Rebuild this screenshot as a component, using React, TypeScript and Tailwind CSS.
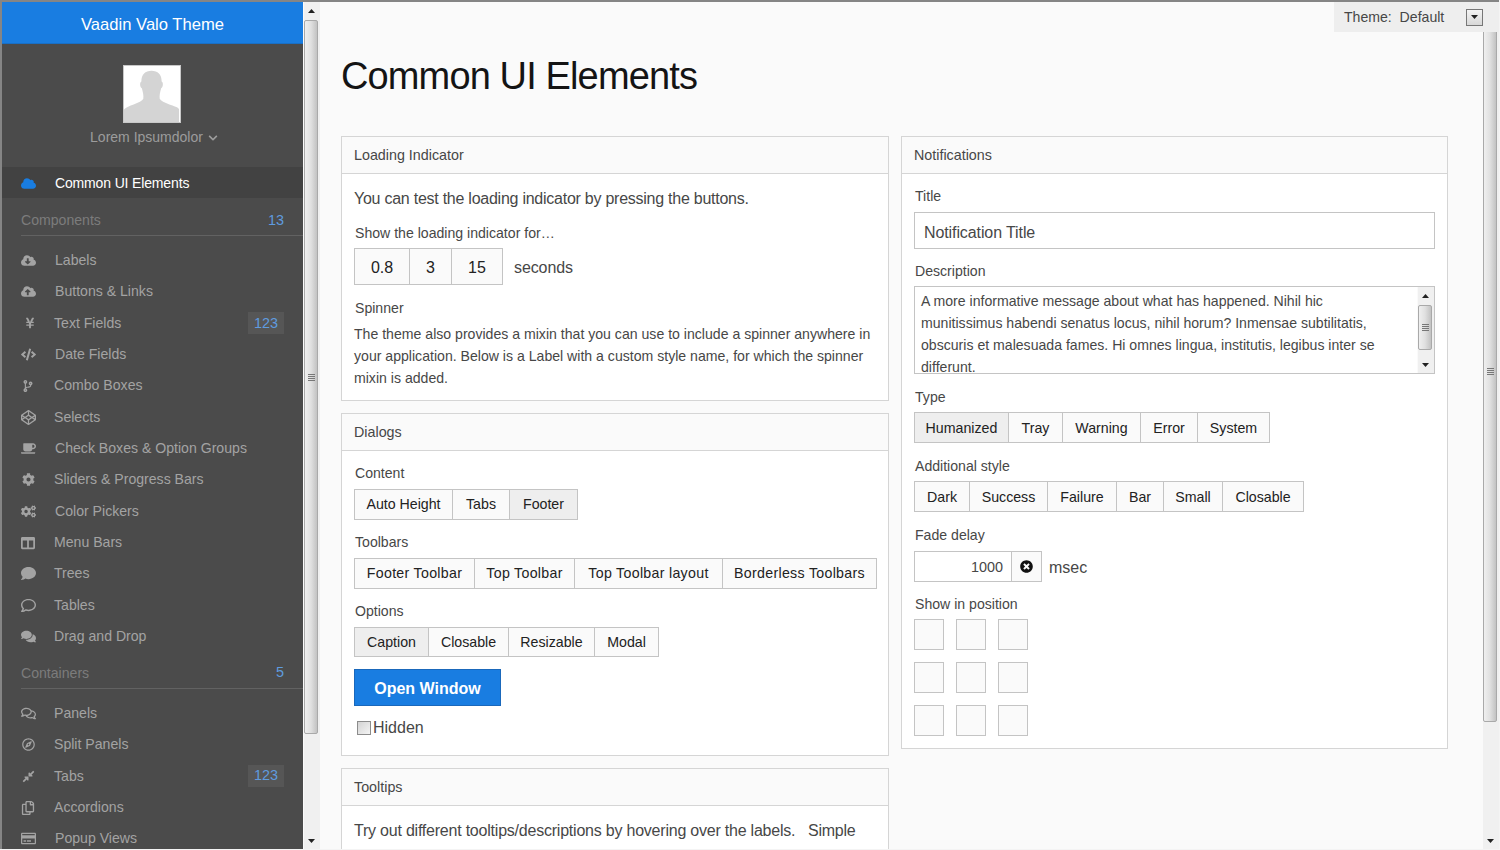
import React from "react";
import {
  FaCloud, FaCloudDownloadAlt, FaCloudUploadAlt, FaYenSign, FaCode, FaCodeBranch, FaCodepen, FaCoffee, FaCog, FaCogs,
  FaColumns, FaComment, FaRegComment, FaComments, FaRegComments, FaRegCompass, FaCompressAlt, FaRegCopy, FaRegCreditCard, FaChevronDown, FaTimesCircle,
} from "react-icons/fa";

type Item = { t: string; I: React.ComponentType<{ className?: string }>; c: string; s: string; badge?: boolean };

const components: Item[] = [
  { t: "Labels", I: FaCloudDownloadAlt, c: "w-[34px]", s: "text-[15px]" },
  { t: "Buttons & Links", I: FaCloudUploadAlt, c: "w-[34px]", s: "text-[15px]" },
  { t: "Text Fields", I: FaYenSign, c: "w-[33px]", s: "text-[12px] ml-[3px]", badge: true },
  { t: "Date Fields", I: FaCode, c: "w-[34px]", s: "text-[15px]" },
  { t: "Combo Boxes", I: FaCodeBranch, c: "w-[33px]", s: "text-[12px] ml-px" },
  { t: "Selects", I: FaCodepen, c: "w-[33px]", s: "text-[15px]" },
  { t: "Check Boxes & Option Groups", I: FaCoffee, c: "w-[34px]", s: "text-[15px]" },
  { t: "Sliders & Progress Bars", I: FaCog, c: "w-[33px]", s: "text-[13px] ml-px" },
  { t: "Color Pickers", I: FaCogs, c: "w-[34px]", s: "text-[15px]" },
  { t: "Menu Bars", I: FaColumns, c: "w-[33px]", s: "text-[14px]" },
  { t: "Trees", I: FaComment, c: "w-[33px]", s: "text-[15px]" },
  { t: "Tables", I: FaRegComment, c: "w-[33px]", s: "text-[15px]" },
  { t: "Drag and Drop", I: FaComments, c: "w-[33px]", s: "text-[15px]" },
];
const containers: Item[] = [
  { t: "Panels", I: FaRegComments, c: "w-[33px]", s: "text-[15px]" },
  { t: "Split Panels", I: FaRegCompass, c: "w-[33px]", s: "text-[13px] ml-px" },
  { t: "Tabs", I: FaCompressAlt, c: "w-[33px]", s: "text-[13px] ml-px", badge: true },
  { t: "Accordions", I: FaRegCopy, c: "w-[33px]", s: "text-[14px]" },
  { t: "Popup Views", I: FaRegCreditCard, c: "w-[34px]", s: "text-[15px]" },
];

function Row({ item }: { item: Item }) {
  const { I } = item;
  return (
    <div className="h-[31.33px] flex items-center pl-[19px] pr-[19px] text-[14.1px] text-[#a3a3a3]">
      <span className={`${item.c} flex items-center`}>
        <I className={item.s} />
      </span>
      <span className="flex-1">{item.t}</span>
      {item.badge && (
        <span className="h-[22px] w-[36px] flex items-center justify-center bg-[#565656] text-[#5f9bdf] text-[14.4px]">123</span>
      )}
    </div>
  );
}

function Section({ t, n, pt }: { t: string; n: string; pt: string }) {
  return (
    <div className={`h-[38px] ml-[19px] ${pt} pr-[19px] flex items-center justify-between border-b border-[#626262] text-[14.1px]`}>
      <span className="text-[#7c7c7c]">{t}</span>
      <span className="text-[#5f9bdf] text-[14.4px]">{n}</span>
    </div>
  );
}

function Tri({ down }: { down?: boolean }) {
  return (
    <svg width="7" height="4" viewBox="0 0 7 4" className="block">
      <path d={down ? "M0 0h7L3.500 4z" : "M3.500 0L7 4H0z"} fill="#222" />
    </svg>
  );
}

function Grip() {
  return (
    <span className="flex flex-col gap-px w-[7px]">
      <span className="h-px bg-[#777]" />
      <span className="h-px bg-[#777]" />
      <span className="h-px bg-[#777]" />
      <span className="h-px bg-[#777]" />
    </span>
  );
}

function Scrollbar({ thumb, top, btn }: { thumb: string; top: string; btn: string }) {
  return (
    <div className="w-[17px] shrink-0 h-full flex flex-col bg-[#f0f0f0] border-l border-[#fafafa]">
      <div className={`${top} shrink-0 flex items-center justify-center pr-[2px]`}>
        <Tri />
      </div>
      <div className={`${thumb} shrink-0 mr-[2px] rounded-[2px] border border-[#a9a9a9] bg-linear-to-r from-[#efefef] via-[#e0e0e0] to-[#c2c2c2] flex items-center justify-center`}>
        <Grip />
      </div>
      <div className="flex-1" />
      <div className={`${btn} shrink-0 flex items-center justify-center pr-[2px]`}>
        <Tri down />
      </div>
    </div>
  );
}

function Card({ title, children, body }: { title: string; children: React.ReactNode; body: string }) {
  return (
    <section className="border border-[#d5d5d5] bg-white">
      <div className="h-[37px] px-3 pt-[2px] flex items-center border-b border-[#d5d5d5] bg-[#fafafa] text-[14.3px]">{title}</div>
      <div className={`px-3 ${body}`}>{children}</div>
    </section>
  );
}

function Label({ children, mt }: { children: React.ReactNode; mt: string }) {
  return <div className={`${mt} ml-px h-[22px] leading-[22px] text-[14.1px]`}>{children}</div>;
}

type Cell = { t: string; w: string };

function Group({ items, on, h, mt, pad = "", extra = "" }: { items: Cell[]; on?: string; h: string; mt: string; pad?: string; extra?: string }) {
  return (
    <div className={`${mt} ${h} ${extra} inline-flex align-top border border-[#c4c4c4] text-[14.2px] text-[#222]`}>
      {items.map((x, i) => (
        <span
          key={x.t}
          className={`${x.w} ${pad} flex items-center justify-center ${i ? "border-l border-[#c4c4c4]" : ""} ${x.t === on ? "bg-[#eeeeee]" : "bg-[#fafafa]"}`}
        >
          {x.t}
        </span>
      ))}
    </div>
  );
}

export default function App() {
  return (
    <div className="w-[1500px] h-[850px] overflow-hidden bg-[#f4f4f4] [font-family:'Liberation_Sans',Arial,sans-serif] text-[#474747]">
      <div className="w-[1499px] h-[849px] flex border-t-2 border-l-2 border-[#858585] relative">
        <aside className="w-[301px] shrink-0 h-full bg-[#4b4b4b] overflow-hidden">
          <div className="h-[42px] pt-[5px] bg-[#197de1] border-b border-[#1a6fc4] flex items-center justify-center text-[16.6px] text-white">
            Vaadin Valo Theme
          </div>
          <div className="h-[123px] pt-[21px] pr-[2px] flex flex-col items-center">
            <svg width="58" height="58" viewBox="0 0 58 58" className="block border border-[#c8c8c8] bg-white">
              <path
                d="M18 16c0-7 4-11 10.500-11S39 9 39 16c2 1 1.500 6-.5 7-1 4-2 7-1.500 11 1 2 5 4 10 6 4 1.500 10 3 10 5v13H0V45c2-2 6-3.500 10-5 5-2 9-4 10-6 .5-4-.5-7-1.500-11-2-1-2.500-6-.5-7z"
                fill="#d4d4d4"
              />
            </svg>
            <div className="mt-[3px] ml-[5px] h-[22px] flex items-center text-[14px] text-[#9c9c9c]">
              Lorem Ipsumdolor
              <FaChevronDown className="ml-[5px] text-[10px] mt-[2px]" />
            </div>
          </div>
          <div className="h-[31px] pt-[2px] bg-[#424242] flex items-center pl-[19px] text-[14px] tracking-[-0.15px] text-white">
            <span className="w-[34px] flex items-center">
              <FaCloud className="text-[15px] text-[#197de1]" />
            </span>
            Common UI Elements
          </div>
          <Section t="Components" n="13" pt="pt-[9px]" />
          <div className="mt-[9px] -mb-[1px]">
            {components.map((i) => (
              <Row key={i.t} item={i} />
            ))}
          </div>
          <Section t="Containers" n="5" pt="pt-[7px]" />
          <div className="mt-[8.7px]">
            {containers.map((i) => (
              <Row key={i.t} item={i} />
            ))}
          </div>
        </aside>
        <Scrollbar top="h-[18px]" thumb="h-[714px]" btn="h-[17px]" />

        <main className="flex-1 min-w-0 h-full bg-[#fafafa] overflow-hidden pl-[21px] pt-[49px]">
          <h1 className="h-[50px] leading-[50px] text-[38px] text-[#141414] tracking-[-0.87px]">Common UI Elements</h1>
          <div className="mt-[35px] grid grid-cols-[548px_547px] gap-x-3 items-start">
            <div className="flex flex-col gap-3">
              <Card title="Loading Indicator" body="pt-[13px] pb-[11px]">
                <div className="h-[22px] leading-[24px] text-[16px] tracking-[-0.25px]">You can test the loading indicator by pressing the buttons.</div>
                <Label mt="mt-[13px]">Show the loading indicator for…</Label>
                <div className="mt-[4px] flex items-center">
                  <div className="h-[37px] flex border border-[#c4c4c4] text-[16px] text-[#222] bg-[#fafafa]">
                    <span className="w-[54px] pt-[2px] flex items-center justify-center">0.8</span>
                    <span className="w-[42px] pt-[2px] flex items-center justify-center border-l border-[#c4c4c4]">3</span>
                    <span className="w-[51px] pt-[2px] flex items-center justify-center border-l border-[#c4c4c4]">15</span>
                  </div>
                  <span className="ml-[11px] pt-[2px] text-[16px] tracking-[-0.1px]">seconds</span>
                </div>
                <Label mt="mt-[12px]">Spinner</Label>
                <p className="mt-[4px] text-[14.1px] leading-[22px]">
                  The theme also provides a mixin that you can use to include a spinner anywhere in your application. Below is a Label with a custom style name, for which the spinner mixin is added.
                </p>
              </Card>

              <Card title="Dialogs" body="pt-[11px] pb-[16px]">
                <Label mt="mt-0">Content</Label>
                <Group
                  mt="mt-[5px]"
                  h="h-[31px]"
                  items={[
                    { t: "Auto Height", w: "w-[97px]" },
                    { t: "Tabs", w: "w-[57px]" },
                    { t: "Footer", w: "w-[68px]" },
                  ]}
                  on="Footer"
                />
                <Label mt="mt-[11px]">Toolbars</Label>
                <Group
                  mt="mt-[5px]"
                  h="h-[31px]"
                  extra="tracking-[0.3px]"
                  items={[
                    { t: "Footer Toolbar", w: "w-[119px]" },
                    { t: "Top Toolbar", w: "w-[100px]" },
                    { t: "Top Toolbar layout", w: "w-[148px]" },
                    { t: "Borderless Toolbars", w: "w-[154px]" },
                  ]}
                />
                <Label mt="mt-[11px]">Options</Label>
                <Group
                  mt="mt-[5px]"
                  h="h-[30px]"
                  pad="pt-[2px]"
                  items={[
                    { t: "Caption", w: "w-[73px]" },
                    { t: "Closable", w: "w-[80px]" },
                    { t: "Resizable", w: "w-[86px]" },
                    { t: "Modal", w: "w-[64px]" },
                  ]}
                  on="Caption"
                />
                <div className="mt-[12px] w-[147px] h-[37px] pt-[2px] flex items-center justify-center bg-[#197de1] border border-[#1a68bb] text-white font-bold text-[16px]">
                  Open Window
                </div>
                <div className="mt-[11px] h-[22px] flex items-center text-[16px]">
                  <span className="ml-[3px] mr-[2px] w-[14px] h-[14px] border border-[#8c8c8c] bg-linear-to-br from-[#d4d4d4] to-[#f4f4f4]" />
                  Hidden
                </div>
              </Card>

              <Card title="Tooltips" body="pt-[13px] pb-[40px]">
                <div className="h-[22px] leading-[24px] text-[16px] tracking-[-0.22px] whitespace-pre">Try out different tooltips/descriptions by hovering over the labels.   Simple</div>
              </Card>
            </div>

            <Card title="Notifications" body="pt-[11px] pb-[12px]">
              <Label mt="mt-0">Title</Label>
              <div className="mt-[5px] h-[37px] flex items-center border border-[#c4c4c4] px-[9px] pt-[4px] text-[16px] tracking-[-0.1px] bg-white">Notification Title</div>
              <Label mt="mt-[11px]">Description</Label>
              <div className="mt-[4px] h-[88px] flex border border-[#c4c4c4] overflow-hidden">
                <div className="flex-1 pl-[6px] pr-[14px] pt-[3px] text-[14.1px] leading-[22px]">
                  A more informative message about what has happened. Nihil hic munitissimus habendi senatus locus, nihil horum? Inmensae subtilitatis, obscuris et malesuada fames. Hi omnes lingua, institutis, legibus inter se differunt.
                </div>
                <Scrollbar top="h-[18px]" thumb="h-[45px]" btn="h-[17px]" />
              </div>
              <Label mt="mt-[12px]">Type</Label>
              <Group
                mt="mt-[4px]"
                h="h-[31px]"
                pad="pt-[2px]"
                items={[
                  { t: "Humanized", w: "w-[93px]" },
                  { t: "Tray", w: "w-[54px]" },
                  { t: "Warning", w: "w-[78px]" },
                  { t: "Error", w: "w-[57px]" },
                  { t: "System", w: "w-[72px]" },
                ]}
                on="Humanized"
              />
              <Label mt="mt-[12px]">Additional style</Label>
              <Group
                mt="mt-[4px]"
                h="h-[31px]"
                pad="pt-[2px]"
                items={[
                  { t: "Dark", w: "w-[54px]" },
                  { t: "Success", w: "w-[78px]" },
                  { t: "Failure", w: "w-[69px]" },
                  { t: "Bar", w: "w-[47px]" },
                  { t: "Small", w: "w-[59px]" },
                  { t: "Closable", w: "w-[81px]" },
                ]}
              />
              <Label mt="mt-[12px]">Fade delay</Label>
              <div className="mt-[5px] flex items-center">
                <div className="h-[31px] flex border border-[#c4c4c4] text-[14.4px]">
                  <span className="w-[96px] pt-[2px] flex items-center justify-end pr-[8px] bg-white">1000</span>
                  <span className="w-[30px] flex items-center justify-center border-l border-[#c4c4c4] bg-[#fafafa] text-[#111]">
                    <FaTimesCircle className="text-[13px]" />
                  </span>
                </div>
                <span className="ml-[7px] pt-[2px] text-[16px]">msec</span>
              </div>
              <Label mt="mt-[11px]">Show in position</Label>
              <div className="mt-[4px] grid grid-cols-[30px_30px_30px] gap-x-3 gap-y-3">
                {Array.from({ length: 9 }).map((_, i) => (
                  <span key={i} className="h-[31px] border border-[#c4c4c4] bg-[#fafafa]" />
                ))}
              </div>
            </Card>
          </div>
        </main>
        <Scrollbar top="h-[18px]" thumb="h-[702px]" btn="h-[17px]" />

        <div className="absolute top-0 right-0 w-[165px] h-[30px] bg-[#eeeeee] flex items-center pl-[10px] text-[14.1px] whitespace-pre">
          <span className="w-[122px] pt-[2px]">Theme:  Default</span>
          <span className="w-[17px] h-[17px] border border-[#777] bg-linear-to-b from-[#f4f4f4] to-[#d8d8d8] flex items-center justify-center">
            <Tri down />
          </span>
        </div>
      </div>
    </div>
  );
}
